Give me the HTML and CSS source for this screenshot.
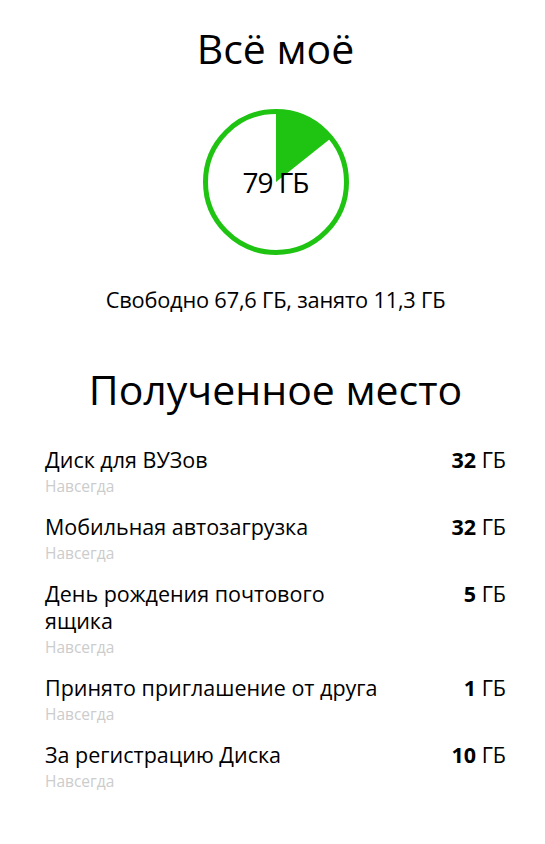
FILE: index.html
```html
<!DOCTYPE html>
<html lang="ru">
<head>
<meta charset="utf-8">
<link rel="stylesheet" href="styles.css">
</head>
<body>
<main class="page">
  <h1 class="title">Всё моё</h1>
  <div class="chart">
    <svg class="pie" width="150" height="150" viewBox="0 0 150 150">
      <circle cx="75" cy="75" r="70.5" fill="none" stroke="#1ec411" stroke-width="5"/>
      <path d="M75 75 L75 4.5 A70.5 70.5 0 0 1 130.2 31.1 Z" fill="#1ec411"/>
    </svg>
    <div class="total">79 ГБ</div>
  </div>
  <p class="summary">Свободно 67,6 ГБ, занято 11,3 ГБ</p>
  <h2 class="subtitle">Полученное место</h2>
  <ul class="list">
    <li class="item">
      <div class="info"><div class="name">Диск для ВУЗов</div><div class="term">Навсегда</div></div>
      <div class="size"><b>32</b> ГБ</div>
    </li>
    <li class="item">
      <div class="info"><div class="name">Мобильная автозагрузка</div><div class="term">Навсегда</div></div>
      <div class="size"><b>32</b> ГБ</div>
    </li>
    <li class="item">
      <div class="info"><div class="name">День рождения почтового<br>ящика</div><div class="term">Навсегда</div></div>
      <div class="size"><b>5</b> ГБ</div>
    </li>
    <li class="item">
      <div class="info"><div class="name">Принято приглашение от друга</div><div class="term">Навсегда</div></div>
      <div class="size"><b>1</b> ГБ</div>
    </li>
    <li class="item">
      <div class="info"><div class="name">За регистрацию Диска</div><div class="term">Навсегда</div></div>
      <div class="size"><b>10</b> ГБ</div>
    </li>
  </ul>
</main>
</body>
</html>
```
FILE: styles.css
```css
html, body {
  margin: 0;
  padding: 0;
  background: #fff;
}
body {
  font-family: "Open Sans", "Noto Sans", sans-serif;
  color: #000;
}
.page {
  padding: 22px 39px 40px 45px;
  display: flex;
  flex-direction: column;
  align-items: center;
}
.title {
  margin: 0;
  font-size: 41px;
  font-weight: 400;
  line-height: 52px;
}
.chart {
  position: relative;
  width: 150px;
  height: 150px;
  margin-top: 33px;
}
.pie {
  display: block;
}
.total {
  position: absolute;
  inset: 0;
  display: flex;
  align-items: center;
  justify-content: center;
  font-size: 28px;
  letter-spacing: -1px;
}
.summary {
  margin: 30px 0 0;
  font-size: 21.8px;
  line-height: 26px;
  letter-spacing: -0.2px;
}
.subtitle {
  margin: 50px 0 0;
  font-size: 41px;
  font-weight: 400;
  line-height: 52px;
}
.list {
  list-style: none;
  margin: 31px 0 0;
  padding: 0;
  align-self: stretch;
  display: flex;
  flex-direction: column;
  gap: 13px;
}
.item {
  display: flex;
  justify-content: space-between;
  align-items: flex-start;
}
.name {
  font-size: 21.5px;
  line-height: 27px;
}
.term {
  font-size: 15.5px;
  line-height: 27px;
  color: #cccccc;
}
.size {
  font-size: 21.5px;
  line-height: 27px;
  white-space: nowrap;
}
.size b {
  font-weight: 700;
}
```
